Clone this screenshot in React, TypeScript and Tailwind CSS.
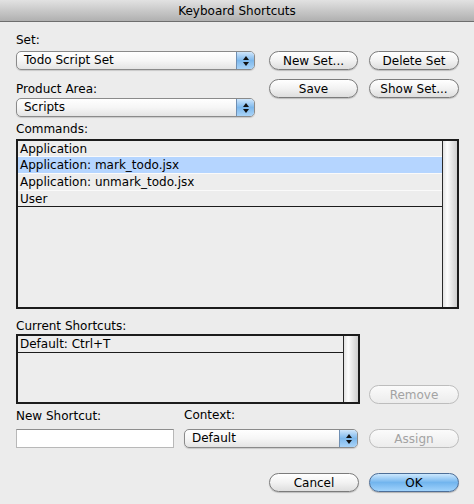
import { ReactNode } from 'react'

const commands = [
  { label: 'Application', h: 'h-[16px]' },
  { label: 'Application: mark_todo.jsx', h: 'h-[17px]' },
  { label: 'Application: unmark_todo.jsx', h: 'h-[17px]' },
  { label: 'User', h: 'h-[16px]' },
]

function Label({ children }: { children: ReactNode }) {
  return <div className="h-[15px] leading-[15px] whitespace-nowrap">{children}</div>
}

function Select({ value, className = '' }: { value: string; className?: string }) {
  return (
    <div
      className={`flex h-[19px] rounded-[5px] border border-[#8a8a8a] bg-gradient-to-b from-white via-[#f6f6f6] to-[#e4e4e4] shadow-[0_1px_1px_rgba(0,0,0,0.15)] overflow-hidden ${className}`}
    >
      <div className="flex-1 pl-[7px] leading-[17px] whitespace-nowrap">{value}</div>
      <div className="w-[18px] flex flex-col items-center justify-center gap-[2px] border-l border-[#6f8fb3] bg-gradient-to-b from-[#cfe6fb] via-[#7db8ec] to-[#a9d3f7]">
        <svg width="6" height="4" viewBox="0 0 6 4">
          <path d="M3 0 L6 4 L0 4 Z" fill="#111" />
        </svg>
        <svg width="6" height="4" viewBox="0 0 6 4">
          <path d="M0 0 L6 0 L3 4 Z" fill="#111" />
        </svg>
      </div>
    </div>
  )
}

function Button({
  children,
  width,
  disabled = false,
  primary = false,
}: {
  children: ReactNode
  width: string
  disabled?: boolean
  primary?: boolean
}) {
  let tone =
    'border-[#7b7b7b] bg-gradient-to-b from-white via-[#f2f2f2] to-[#dedede] text-black shadow-[0_1px_1px_rgba(0,0,0,0.2)]'
  if (disabled) tone = 'border-[#bdbdbd] bg-gradient-to-b from-[#fbfbfb] to-[#ececec] text-[#a3a3a3]'
  if (primary)
    tone =
      'border-[#4d6e97] bg-gradient-to-b from-[#cde8fd] via-[#72b5ee] to-[#9fd2fb] text-black shadow-[0_1px_1px_rgba(0,0,0,0.25)]'
  return (
    <div
      className={`${width} h-[19px] rounded-full border flex items-center justify-center leading-none whitespace-nowrap ${tone}`}
    >
      {children}
    </div>
  )
}

function Scrollbar() {
  return <div className="w-[14px] bg-gradient-to-r from-[#e2e2e2] via-[#fdfdfd] via-30% to-[#cfcfcf]" />
}

export default function App() {
  return (
    <div
      className="w-[474px] h-[504px] bg-[#ececec] text-black text-[12px] flex flex-col"
      style={{ fontFamily: '"DejaVu Sans", "Liberation Sans", sans-serif' }}
    >
      {/* title bar */}
      <div className="h-[22px] shrink-0 flex items-center justify-center border-b border-[#6e6e6e] bg-gradient-to-b from-[#e2e2e2] to-[#b0b0b0]">
        Keyboard Shortcuts
      </div>

      <div className="flex flex-col pl-[16px] pr-[15px] pt-[11px]">
        {/* set + product area */}
        <div className="flex">
          <div className="w-[240px] flex flex-col">
            <Label>Set:</Label>
            <Select value="Todo Script Set" className="mt-[3px]" />
            <div className="mt-[12px]">
              <Label>Product Area:</Label>
            </div>
            <Select value="Scripts" className="mt-[1px]" />
          </div>
          <div className="ml-[14px] mt-[18px] grid grid-cols-[89px_90px] gap-x-[11px] gap-y-[9px] content-start">
            <Button width="w-[89px]">New Set...</Button>
            <Button width="w-[90px]">Delete Set</Button>
            <Button width="w-[89px]">Save</Button>
            <Button width="w-[90px]">Show Set...</Button>
          </div>
        </div>

        {/* commands list */}
        <div className="mt-[5px]">
          <Label>Commands:</Label>
        </div>
        <div className="mt-[2px] h-[170px] flex border-2 border-[#1c1c1c] bg-[#ededed]">
          <div className="flex-1 border-r border-[#2a2a2a]">
            {commands.map((c, i) => (
              <div
                key={c.label}
                className={`${c.h} flex items-center pl-[2px] whitespace-nowrap border-b ${
                  i === commands.length - 1 ? 'border-[#1c1c1c]' : 'border-[#fafafa]'
                } ${i === 1 ? 'bg-[#b5d5ff]' : ''}`}
              >
                {c.label}
              </div>
            ))}
          </div>
          <Scrollbar />
        </div>

        {/* current shortcuts */}
        <div className="mt-[10px]">
          <Label>Current Shortcuts:</Label>
        </div>
        <div className="flex items-end">
          <div className="w-[344px] h-[70px] flex border-2 border-[#1c1c1c] bg-[#ededed]">
            <div className="flex-1 border-r border-[#2a2a2a]">
              <div className="h-[17px] flex items-center pl-[2px] border-b border-[#1c1c1c]">Default: Ctrl+T</div>
            </div>
            <Scrollbar />
          </div>
          <div className="ml-auto">
            <Button width="w-[90px]" disabled>
              Remove
            </Button>
          </div>
        </div>

        {/* new shortcut row */}
        <div className="mt-[4px] flex items-end">
          <div className="w-[158px] flex flex-col">
            <Label>New Shortcut:</Label>
            <div className="mt-[5px] h-[19px] bg-white border border-[#b8b8b8] border-t-[#8e8e8e]" />
          </div>
          <div className="ml-[10px] w-[174px] flex flex-col">
            <Label>Context:</Label>
            <Select value="Default" className="mt-[6px]" />
          </div>
          <div className="ml-auto">
            <Button width="w-[90px]" disabled>
              Assign
            </Button>
          </div>
        </div>

        {/* dialog buttons */}
        <div className="mt-[25px] flex justify-end gap-[10px]">
          <Button width="w-[90px]">Cancel</Button>
          <Button width="w-[90px]" primary>
            OK
          </Button>
        </div>
      </div>
    </div>
  )
}
